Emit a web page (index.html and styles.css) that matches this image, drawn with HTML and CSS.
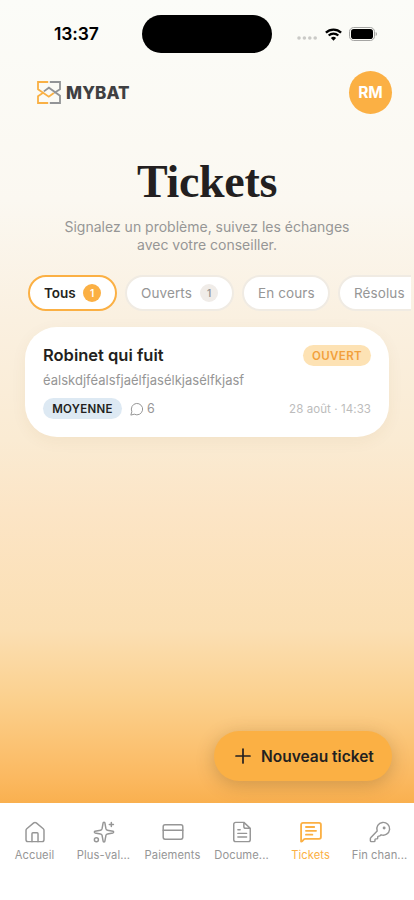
FILE: index.html
```html
<!DOCTYPE html>
<html lang="fr">
<head>
<meta charset="utf-8">
<meta name="viewport" content="width=device-width, initial-scale=1">
<title>Tickets</title>
<link rel="stylesheet" href="styles.css">
</head>
<body>
<div class="app">
  <header class="status">
    <span class="time">13:37</span>
    <span class="island"></span>
    <span class="indicators">
      <svg width="20" height="4" viewBox="0 0 20 4" fill="#cacac7"><circle cx="2" cy="2" r="1.8"/><circle cx="7.4" cy="2" r="1.8"/><circle cx="12.8" cy="2" r="1.8"/><circle cx="18.2" cy="2" r="1.8"/></svg>
      <svg class="wifi" width="17" height="13" viewBox="0 0 17 13" fill="none" stroke="#000" stroke-width="2.3"><path d="M.9 4.6a11 11 0 0 1 15.2 0M3.7 7.5a7 7 0 0 1 9.6 0"/><path d="M8.5 12.7 5.9 10a3.8 3.8 0 0 1 5.2 0z" fill="#000" stroke="none"/></svg>
      <svg class="battery" width="28" height="14" viewBox="0 0 28 14"><rect x=".5" y=".5" width="25" height="13" rx="4.2" fill="none" stroke="#a5a5a3"/><rect x="2" y="2" width="22" height="10" rx="2.8"/><path d="M26.7 5v4q1.3-.5 1.3-2t-1.3-2" fill="#a5a5a3"/></svg>
    </span>
  </header>

  <div class="topbar">
    <div class="brand">
      <svg width="24" height="23" viewBox="0 0 24 23" fill="none" stroke-width="1.8">
        <path stroke="#f9b044" d="M11.2 1H1v7.200l10.800 7.500 5-3.700M6.900 11.300 1 15.200V22h10.200"/>
        <path stroke="#929496" d="M12.800 1H23v7.200l-5.900 3.900M6.900 10.400l5-3.700L23 14.700V22H12.800"/>
      </svg>
      <span class="wordmark">MYBAT</span>
    </div>
    <div class="avatar">RM</div>
  </div>

  <h1>Tickets</h1>
  <p class="intro">Signalez un problème, suivez les échanges<br>avec votre conseiller.</p>

  <div class="filters">
    <button class="chip chip-active">Tous<span class="count">1</span></button>
    <button class="chip chip-open">Ouverts<span class="count">1</span></button>
    <button class="chip chip-progress">En cours</button>
    <button class="chip chip-solved">Résolus</button>
  </div>

  <article class="card">
    <div class="row row-title"><h2>Robinet qui fuit</h2><span class="badge badge-open">OUVERT</span></div>
    <p class="excerpt">éalskdjféalsfjaélfjasélkjasélfkjasf</p>
    <div class="row">
      <span class="badge badge-priority">MOYENNE</span>
      <span class="replies"><svg width="14" height="14" viewBox="0 0 14 14" fill="none" stroke="#969696" stroke-linecap="round" stroke-linejoin="round"><path d="M1.700 9.400a5.700 5.700 0 1 1 2.600 2.800L1.200 13z"/></svg><span>6</span></span>
      <time>28 août · 14:33</time>
    </div>
  </article>

  <button class="fab"><svg width="16" height="16" viewBox="0 0 16 16" stroke="#231f20" stroke-width="1.7" stroke-linecap="round"><path d="M8 1v14M1 8h14"/></svg><span>Nouveau ticket</span></button>

  <nav class="tabs">
    <a class="tab"><svg viewBox="0 0 24 24"><path d="M2.200 10.100q0-1 .8-1.700l7.600-6.300q1.400-1.100 2.800 0L21 8.400q.8.700.8 1.700V20.500q0 2-2 2H4.200q-2 0-2-2z"/><path d="M8.700 22.500v-8.700q0-1 1-1h4.600q1 0 1 1v8.700"/></svg><span>Accueil</span></a>
    <a class="tab"><svg viewBox="0 0 24 24"><path d="M11 2.300a1 1 0 0 1 2 0l1.100 6.100q.3 1.400 1.600 1.600l6.100 1.100a1 1 0 0 1 0 1.900l-6.100 1.100q-1.300.2-1.600 1.600L13 21.800a1 1 0 0 1-2 0l-1.100-6.100Q9.600 14.300 8.300 14.100L2.200 13a1 1 0 0 1 0-1.900L8.300 10q1.300-.2 1.600-1.600z"/><path d="M20 1.500v4.500M22.300 3.700h-4.500"/><circle cx="3.700" cy="20.500" r="2.200"/></svg><span>Plus-val...</span></a>
    <a class="tab"><svg viewBox="0 0 24 24"><rect x="1.300" y="4.200" width="21.400" height="15.600" rx="2"/><path d="M1.300 10h21.400"/></svg><span>Paiements</span></a>
    <a class="tab"><svg viewBox="0 0 24 24"><path d="M14 1.500H5a2 2 0 0 0-2 2v17a2 2 0 0 0 2 2h14a2 2 0 0 0 2-2V8zM14 1.500V6q0 2 2 2h5M7.500 9.500h2.500M7.500 13.500h9.500M7.500 17.500h9.500"/></svg><span>Docume...</span></a>
    <a class="tab tab-active"><svg viewBox="0 0 24 24"><path d="M1.200 22.300V4a2 2 0 0 1 2-2h17.600a2 2 0 0 1 2 2v13.500a2 2 0 0 1-2 2H5.800q-1 0-1.600.6l-1.500 1.700q-1 .9-1.500.5zM6.500 6.500h9M6.500 10.700h11M6.500 14.900h7"/></svg><span>Tickets</span></a>
    <a class="tab"><svg viewBox="0 0 24 24"><path d="M2.100 17.900A2 2 0 0 0 1.500 19.300V21.500a1 1 0 0 0 1 1h3a1 1 0 0 0 1-1v-1a1 1 0 0 1 1-1h1a1 1 0 0 0 1-1v-1a1 1 0 0 1 1-1h.5a2 2 0 0 0 1.400-.6l.8-.8a7 7 0 1 0-4.300-4.300z"/><circle cx="16.500" cy="7.700" r=".8" fill="currentColor"/></svg><span>Fin chan...</span></a>
  </nav>
</div>
</body>
</html>
```
FILE: styles.css
```css
* { box-sizing: border-box; }
body { margin: 0; font-family: Inter, "Liberation Sans", sans-serif; color: #231f20; }
button { font-family: inherit; border: 0; padding: 0; }
h1, h2, p { margin: 0; }
svg { display: block; flex: none; }

.app {
  width: 414px; height: 900px; overflow: hidden;
  display: flex; flex-direction: column;
  background: linear-gradient(#fbfcf8 0, #fbf8f1 200px, #faf0e0 320px, #faebd3 440px, #fce5c6 510px, #fbdfb3 630px, #fbd08d 700px, #fbb85f 780px, #f9b04f 803px);
}

.status { display: flex; height: 67px; padding: 15px 36px 0 54px; align-items: flex-start; }
.time { width: 88px; font-size: 17.5px; font-weight: 600; line-height: 38px; color: #000; letter-spacing: -.1px; }
.island { width: 130px; height: 38px; border-radius: 19px; background: #000; }
.indicators { display: flex; height: 38px; align-items: center; margin-left: 25px; }
.indicators > svg:first-child { margin-top: 8px; }
.wifi { margin-left: 8px; }
.battery { margin-left: 7px; }

.topbar { display: flex; height: 52px; padding: 4px 22px 5px 37px; align-items: center; justify-content: space-between; }
.brand { display: flex; align-items: center; gap: 5px; }
.wordmark { font-size: 17px; line-height: 20px; font-weight: 800; color: #3f4042; letter-spacing: .1px; }
.avatar { width: 43px; height: 43px; border-radius: 50%; background: #fbb044; color: #fff; font-size: 15.5px; font-weight: 700; line-height: 43px; text-align: center; }

h1 { margin-top: 33px; height: 60px; line-height: 60px; text-align: center; font-family: "Liberation Serif", serif; font-size: 46px; font-weight: 700; letter-spacing: -.3px; }
.intro { margin-top: 6px; text-align: center; color: #969696; font-size: 14px; line-height: 17.5px; }

.filters { display: flex; gap: 8px; margin: 21px 3px 0 28px; height: 37px; align-items: center; overflow: hidden; }
.chip { display: flex; flex: none; height: 36px; align-items: center; justify-content: space-between; padding: 0 14px; border: 2px solid #f0ebe3; border-radius: 18px; background: #fff; color: #969696; font-size: 13.5px; font-weight: 400; letter-spacing: .1px; white-space: nowrap; }
.chip-active { width: 89px; border-color: #fbb044; color: #231f20; font-weight: 600; letter-spacing: 0; }
.chip-open { width: 109px; padding-left: 14px; }
.chip-progress { width: 88px; }
.chip-solved { width: 95px; }
.count { width: 18px; height: 18px; border-radius: 9px; background: #f0ece8; font-size: 10px; font-weight: 600; line-height: 18px; text-align: center; letter-spacing: 0; }
.chip-active .count { background: #fbb044; color: #fff; }

.card { width: 364px; height: 110px; margin: 16px 0 0 25px; padding: 18px 18px 0; border-radius: 32px; background: #fff; box-shadow: 0 4px 16px rgba(120, 80, 20, .06); }
.row { display: flex; align-items: center; height: 21px; }
.row-title { justify-content: space-between; }
h2 { font-size: 16.5px; font-weight: 600; line-height: 21px; }
.badge { display: flex; align-items: center; justify-content: center; height: 21px; border-radius: 11px; font-size: 11.5px; font-weight: 600; }
.badge-open { width: 68px; background: #fde2b4; color: #f2a03b; letter-spacing: .4px; }
.badge-priority { width: 79px; background: #dde9f3; letter-spacing: .3px; }
.excerpt { margin: 5px 0 9px; height: 18px; font-size: 13px; line-height: 18px; color: #969696; letter-spacing: .02px; }
.replies { display: flex; align-items: center; gap: 3px; margin-left: 8px; font-size: 12.5px; color: #969696; }
time { margin-left: auto; color: #bcbcbc; font-size: 11.5px; letter-spacing: .08px; }

.fab { display: flex; align-items: center; gap: 10px; width: 178px; height: 50px; margin: 294px 22px 0 auto; padding-left: 21px; border-radius: 25px; background: #fbb044; color: #231f20; font-size: 15.5px; font-weight: 600; box-shadow: 0 4px 18px rgba(80, 55, 20, .25); white-space: nowrap; }

.tabs { display: grid; grid-template-columns: repeat(6, 1fr); height: 97px; margin-top: auto; padding-top: 18px; background: #fff; position: relative; }
.tab { display: flex; flex-direction: column; align-items: center; color: #969696; font-size: 11.2px; font-weight: 400; letter-spacing: .08px; line-height: 14px; white-space: nowrap; }
.tab svg { width: 22px; height: 22px; margin-bottom: 5px; fill: none; stroke: currentColor; stroke-width: 1.6; stroke-linecap: round; stroke-linejoin: round; }
.tab-active { color: #fbb044; }
.tab-active svg { stroke-width: 2; }
```
